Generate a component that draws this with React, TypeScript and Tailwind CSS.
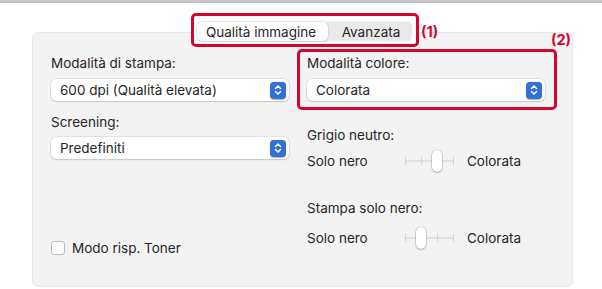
import React from 'react';

const RED = 'border-[#d4062f]';

function Stepper() {
  return (
    <div className="w-[16px] h-[17px] rounded-[4px] bg-[#2f72d4] flex items-center justify-center shadow-[0_0.5px_1px_rgba(0,0,0,0.3)]">
      <svg width="8" height="12" viewBox="0 0 8 12" fill="none">
        <path d="M1.5 4.5 L4 2 L6.5 4.5" stroke="white" strokeWidth="1.5" strokeLinecap="round" strokeLinejoin="round" />
        <path d="M1.5 7.5 L4 10 L6.5 7.5" stroke="white" strokeWidth="1.5" strokeLinecap="round" strokeLinejoin="round" />
      </svg>
    </div>
  );
}

function Popup({ value }: { value: string }) {
  return (
    <div className="w-[238px] h-[22px] bg-white rounded-[5px] flex items-center justify-between pl-[9px] pr-[3px] shadow-[0_0_0_0.5px_rgba(0,0,0,0.14),0_1px_1.5px_rgba(0,0,0,0.12)]">
      <span>{value}</span>
      <Stepper />
    </div>
  );
}

function Slider({ pos }: { pos: number }) {
  const ticks = [0, 16, 32, 48];
  return (
    <div className="relative w-[50px] h-[22px]">
      <div className="absolute left-[1px] right-[1px] top-[10px] h-[2px] bg-[#e2e2e2]" />
      {ticks.map((t) => (
        <div key={t} className="absolute top-[7px] w-px h-[8px] bg-[#d3d3d3]" style={{ left: t + 1 }} />
      ))}
      <div
        className="absolute top-0 w-[10px] h-[22px] rounded-full bg-white shadow-[0_0_0_0.5px_rgba(0,0,0,0.2),0_1px_2px_rgba(0,0,0,0.2)]"
        style={{ left: ticks[pos] - 4 }}
      />
    </div>
  );
}

function SliderRow({ pos }: { pos: number }) {
  return (
    <div className="flex items-center h-[22px]">
      <span className="w-[97px]">Solo nero</span>
      <Slider pos={pos} />
      <span className="ml-[13px]">Colorata</span>
    </div>
  );
}

export default function App() {
  return (
    <div className="w-[602px] h-[289px] bg-white overflow-hidden text-[13.5px] leading-[16px] text-[#262626] [font-family:Inter,'Liberation_Sans',sans-serif]">
      <div className="h-[3px] bg-[#c8c8c8] border-b border-[#bdbdbd]" />

      {/* tab bar */}
      <div className="relative z-10 flex items-start mt-[10px] ml-[191px]">
        <div className={`border-[3px] ${RED} rounded-[5px] bg-white pt-[6px] pb-[3px] pl-[3px] pr-[4px]`}>
          <div className="flex h-[19px] rounded-[5px] bg-[#e9e9e9] shadow-[0_0_0_0.5px_rgba(0,0,0,0.08)]">
            <div className="w-[131px] flex items-center justify-center pr-[3px] bg-white rounded-[5px] shadow-[0_0_0_0.5px_rgba(0,0,0,0.12),0_1px_1px_rgba(0,0,0,0.08)]">
              Qualità immagine
            </div>
            <div className="w-[84px] flex items-center justify-center pl-[2px]">Avanzata</div>
          </div>
        </div>
        <span className="ml-[2px] mt-[12px] text-[14.5px] leading-[14px] font-bold text-[#d4062f]">(1)</span>
      </div>

      {/* panel */}
      <div className="-mt-[15px] ml-[32px] w-[541px] h-[255px] rounded-[6px] bg-[#f3f3f3] border border-[#e7e7e7] flex">
        <div className="ml-[18px] w-[238px] flex flex-col">
          <span className="mt-[22px]">Modalità di stampa:</span>
          <div className="mt-[8px]">
            <Popup value="600 dpi (Qualità elevata)" />
          </div>
          <span className="mt-[13px]">Screening:</span>
          <div className="mt-[7px]">
            <Popup value="Predefiniti" />
          </div>
          <div className="mt-[81px] flex items-center">
            <div className="w-[14px] h-[14px] rounded-[3px] bg-white border border-[#bdbdbd]" />
            <span className="ml-[7px]">Modo risp. Toner</span>
          </div>
        </div>

        <div className="ml-[8px] w-[274px] flex flex-col">
          <span className="self-end text-[14.5px] leading-[14px] font-bold text-[#d4062f]">(2)</span>
          <div className={`mt-[2px] w-[260px] border-[3px] ${RED} rounded-[5px] pt-[3px] pb-[6px] pl-[7px]`}>
            <div>Modalità colore:</div>
            <div className="mt-[8px]">
              <Popup value="Colorata" />
            </div>
          </div>
          <div className="pl-[10px] flex flex-col">
            <span className="mt-[17px]">Grigio neutro:</span>
            <div className="mt-[7px]">
              <SliderRow pos={2} />
            </div>
            <span className="mt-[28px]">Stampa solo nero:</span>
            <div className="mt-[11px]">
              <SliderRow pos={1} />
            </div>
          </div>
        </div>
      </div>
    </div>
  );
}
